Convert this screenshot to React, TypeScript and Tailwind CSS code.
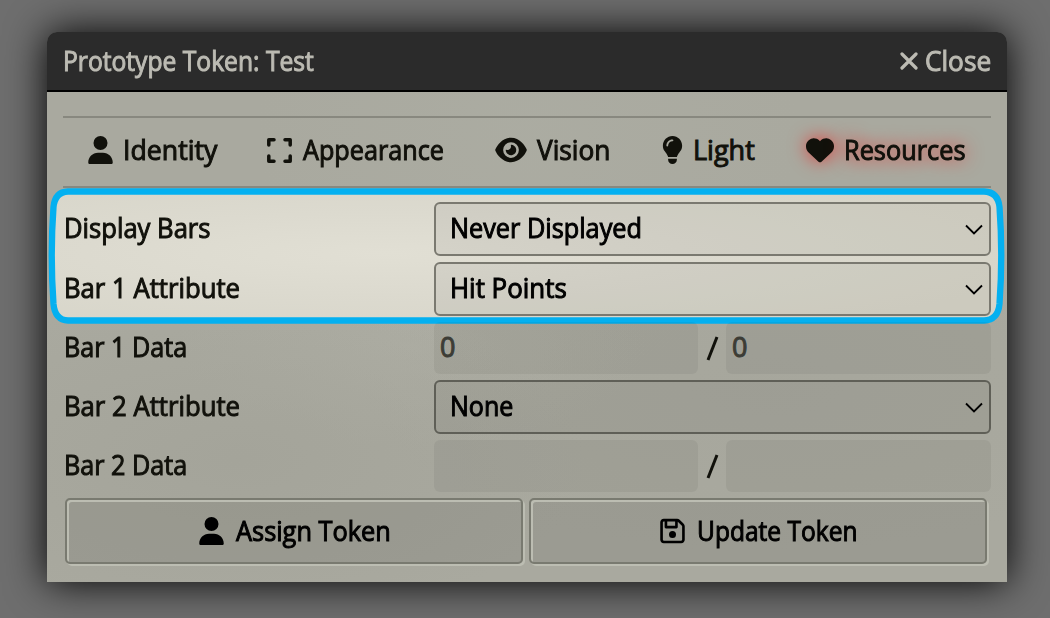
import { useLayoutEffect, useRef, useState } from "react";
import type { ReactNode } from "react";
import { FaEye, FaHeart, FaLightbulb, FaRegFloppyDisk, FaUser } from "react-icons/fa6";

/* A single line of text condensed to the given width. */
function Label({ children, w, className = "" }: { children: string; w: number; className?: string }) {
  const ref = useRef<HTMLSpanElement>(null);
  const [scale, setScale] = useState(1);
  useLayoutEffect(() => {
    if (ref.current) setScale(w / ref.current.offsetWidth);
  }, [w]);
  return (
    <span className={`inline-block shrink-0 whitespace-nowrap ${className}`} style={{ width: w }}>
      <span ref={ref} className="inline-block origin-left" style={{ transform: `scaleX(${scale})` }}>
        {children}
      </span>
    </span>
  );
}

function Row({ label, w, tall, children }: { label: string; w: number; tall?: boolean; children: ReactNode }) {
  return (
    <div className={`flex items-center ${tall ? "h-[54px]" : "h-[52px]"}`}>
      <div className="w-[371px] shrink-0 pb-[2px] pl-px">
        <Label w={w}>{label}</Label>
      </div>
      <div className="flex h-full w-[557px] items-center">{children}</div>
    </div>
  );
}

function Select({ value, w, dark }: { value: string; w: number; dark?: boolean }) {
  return (
    <div
      className={`flex h-full w-full items-center justify-between rounded-[6px] border-2 bg-black/5 pr-[6px] pl-[14px] text-black ${
        dark ? "border-[#5f5f57]" : "border-[#7a7970]"
      }`}
    >
      <Label w={w} className="mb-[2px]">{value}</Label>
      <svg className="h-[11px] w-[18px]" viewBox="0 0 18 11" fill="none" stroke="#000" strokeWidth="1.8">
        <path d="M1 1.500 9 9.500 17 1.500" />
      </svg>
    </div>
  );
}

function Data({ value }: { value: string }) {
  return (
    <>
      <div className="flex h-full w-[264px] items-center rounded-[6px] bg-black/5 pb-[2px] pl-[6px] text-[#3c3c35]">
        {value && <Label w={15}>{value}</Label>}
      </div>
      <div className="flex w-[28px] justify-center">
        <svg className="h-[25px] w-[13px]" viewBox="0 0 13 25" stroke="#11110b" strokeWidth="3">
          <path d="M2 24 11 1" />
        </svg>
      </div>
      <div className="flex h-full w-[265px] items-center rounded-[6px] bg-black/5 pb-[2px] pl-[6px] text-[#3c3c35]">
        {value && <Label w={15}>{value}</Label>}
      </div>
    </>
  );
}

const button =
  "flex h-[66px] w-[458px] items-center justify-center rounded-[5px] border-2 border-[#797a70] bg-black/8 pl-px text-black shadow-[inset_2px_2px_0_#bcbdb2,2px_2px_0_#bcbdb2]";

export default function App() {
  return (
    <div className="h-[618px] w-[1050px] overflow-hidden bg-[#6e6e6e] px-[47px] pt-8 font-['Open_Sans','Noto_Sans',sans-serif] text-[27px] leading-[36px] text-[#11110b] [-webkit-text-stroke:1px_currentColor]">
      <div className="h-[550px] w-[960px] rounded-t-[10px] shadow-[0_0_40px_#000]">
        <header className="flex h-[60px] items-center justify-between rounded-t-[10px] border-b-2 border-black bg-[#2b2b2b] pr-[16px] pl-[16px] text-[#bcbbb3]">
          <Label w={251}>Prototype Token: Test</Label>
          <div className="flex items-center">
            <svg className="mr-[7px] mb-px size-[18px]" viewBox="0 0 18 18" stroke="currentColor" strokeWidth="3.200" strokeLinecap="round">
              <path d="M2 2 16 16M16 2 2 16" />
            </svg>
            <Label w={66}>Close</Label>
          </div>
        </header>
        <main className="relative h-[490px] bg-[#a9a99f] bg-[radial-gradient(ellipse_at_20%_75%,#a0a09690_0,transparent_32%),radial-gradient(ellipse_at_38%_52%,#b0b0a680_0,transparent_28%),radial-gradient(ellipse_at_75%_60%,#a4a49a80_0,transparent_40%),radial-gradient(ellipse_at_50%_8%,#adaea480_0,transparent_40%)] px-[16px] pt-6">
          <svg className="absolute top-[94px] left-0 h-[142px] w-[960px]" viewBox="0 0 960 142">
            <defs>
              <radialGradient id="paper" cx="35%" cy="48%" r="70%">
                <stop offset="0" stopColor="#e1dfd4" />
                <stop offset=".45" stopColor="#dcdacf" />
                <stop offset="1" stopColor="#d7d5c9" />
              </radialGradient>
            </defs>
            <path
              d="M21 5.500H937Q951 6 952.500 21Q956 69 952.500 118Q951 134 937 134.500H21Q8 134 6.500 118Q3 69 6.500 21Q8 6 21 5.500Z"
              fill="url(#paper)"
              stroke="#04b0f0"
              strokeWidth="6.300"
            />
          </svg>
          <nav className="flex h-[72px] items-center border-y-2 border-[#88887f] pb-[4px] pl-[25px]">
            <FaUser className="h-[28px] w-[25px]" />
            <Label w={94} className="ml-[10px]">Identity</Label>
            <svg className="ml-[50px] size-[25px]" viewBox="0 0 25 25" fill="none" stroke="currentColor" strokeWidth="3.500" strokeLinecap="round" strokeLinejoin="round">
              <path d="M1.800 7V1.800H7M18 1.800H23.200V7M23.200 18V23.200H18M7 23.200H1.800V18" />
            </svg>
            <Label w={141} className="ml-[11px]">Appearance</Label>
            <FaEye className="ml-[51px] h-[28px] w-[32px]" />
            <Label w={73} className="ml-[10px]">Vision</Label>
            <FaLightbulb className="ml-[52px] h-[28px] w-[21px]" />
            <Label w={62} className="ml-[10px]">Light</Label>
            <FaHeart className="ml-[51px] size-[28px] [filter:drop-shadow(0_0_9px_#ff0000a0)]" />
            <Label w={122} className="ml-[10px] [text-shadow:0_0_20px_#ff0000]">Resources</Label>
          </nav>
          <form className="relative mt-[14px] flex flex-col gap-[6px]">
            <Row label="Display Bars" w={147} tall>
              <Select value="Never Displayed" w={192} />
            </Row>
            <Row label="Bar 1 Attribute" w={176} tall>
              <Select value="Hit Points" w={117} />
            </Row>
            <Row label="Bar 1 Data" w={123}>
              <Data value="0" />
            </Row>
            <Row label="Bar 2 Attribute" w={176} tall>
              <Select value="None" w={63} dark />
            </Row>
            <Row label="Bar 2 Data" w={123}>
              <Data value="" />
            </Row>
            <footer className="ml-[2px] flex gap-[6px]">
              <button type="button" className={button}>
                <FaUser className="mr-[12px] mb-px h-[28px] w-[25px]" />
                <Label w={155}>Assign Token</Label>
              </button>
              <button type="button" className={button}>
                <FaRegFloppyDisk className="mr-[12px] mb-px h-[28px] w-[25px]" />
                <Label w={161}>Update Token</Label>
              </button>
            </footer>
          </form>
        </main>
      </div>
    </div>
  );
}
